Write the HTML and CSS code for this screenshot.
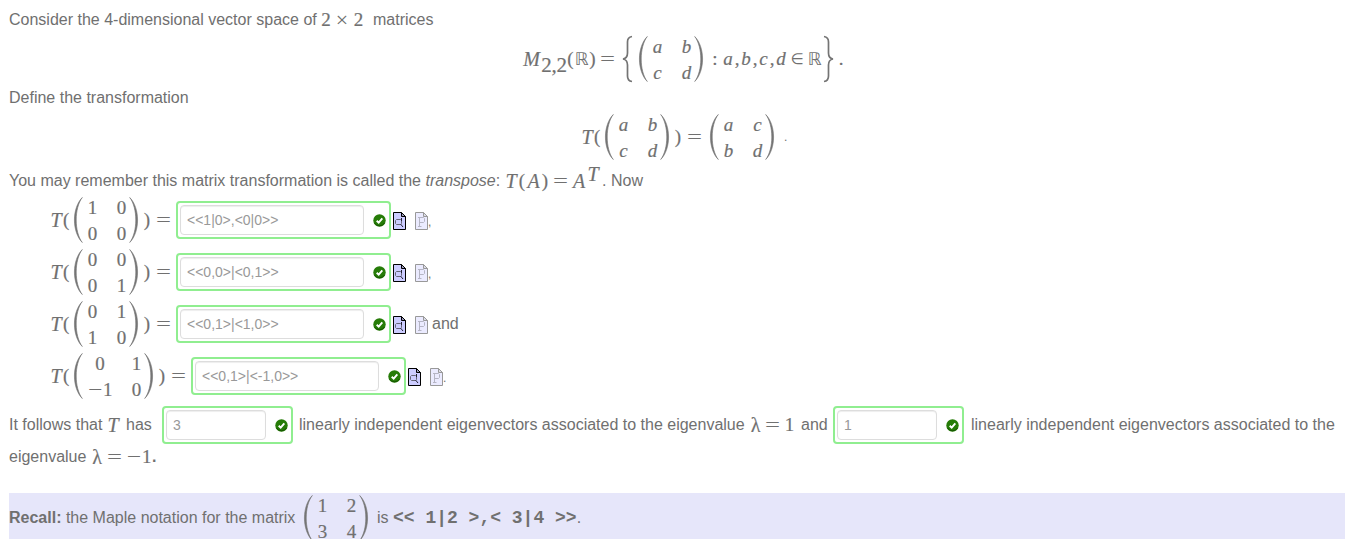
FILE: index.html
```
<!DOCTYPE html>
<html lang="en">
<head>
<meta charset="utf-8">
<title>Matrix transformations</title>
<link rel="stylesheet" href="styles.css">
</head>
<body>
<svg class="defs" width="0" height="0">
  <defs>
    <symbol id="lp" viewBox="0 0 10 48"><path d="M9.300 1.500C-1.200 12 -1.200 36 9.300 46.500C1.200 36 1.200 12 9.300 1.500Z" fill="#747474" stroke="#747474" stroke-width=".6"/></symbol>
    <symbol id="rp" viewBox="0 0 10 48"><path d="M.7 1.500C11.200 12 11.200 36 .7 46.500C8.800 36 8.800 12 .7 1.500Z" fill="#747474" stroke="#747474" stroke-width=".6"/></symbol>
    <symbol id="lb" viewBox="0 0 11 48"><path d="M10 1.500C6.500 2 5.500 4 5.500 7V18C5.500 21.500 4 23.500 1 24C4 24.500 5.500 26.500 5.500 30V41C5.500 44 6.500 46 10 46.500" fill="none" stroke="#747474" stroke-width="1.700"/></symbol>
    <symbol id="rb" viewBox="0 0 11 48"><path d="M1 1.500C4.500 2 5.500 4 5.500 7V18C5.500 21.500 7 23.500 10 24C7 24.500 5.500 26.500 5.500 30V41C5.500 44 4.500 46 1 46.500" fill="none" stroke="#747474" stroke-width="1.700"/></symbol>
    <symbol id="ok" viewBox="0 0 13 13"><circle cx="6.500" cy="6.500" r="6.200" fill="#267c08"/><path d="M1.500 9A6 6 0 0 0 11.500 9" fill="none" stroke="#155500" stroke-width="1"/><path d="M3.700 6.700L5.700 8.600L9.300 4.400" fill="none" stroke="#fff" stroke-width="1.900"/></symbol>
    <symbol id="view" viewBox="0 0 13 18"><path d="M.5 .5H8.500L12.500 4.500V17.500H.5Z" fill="#ccf" stroke="#000"/><path d="M8.500 .5V4.500H12.500Z" fill="#99b" stroke="#000"/><path d="M3.500 7.500H7.500L8.500 8.500V11.500L7.500 12.500H3.500L2.500 11.500V8.500Z" fill="#ccf" stroke="#667"/><path d="M7.500 12L10 15M8.500 6V9" fill="none" stroke="#223"/></symbol>
    <symbol id="page" viewBox="0 0 13 18"><path d="M.5 .5H8.500L12.500 4.500V17.500H.5Z" fill="#ebebff" stroke="#999"/><path d="M8.500 .5V4.500H12.500Z" fill="#dcdce8" stroke="#999"/><path d="M3 5.500H8.500L9.500 6.500V9.500L8.500 10.500H5M4.500 5.500V14.500M3 14.500H6.500" fill="none" stroke="#b5b5c4"/></symbol>
  </defs>
</svg>
<main class="question">
  <p class="line intro"><span class="w312">Consider the 4-dimensional vector space of</span><span class="m w10">2</span><span class="m w22 times">×</span><span class="m w11">2</span><span class="after8">matrices</span></p>

  <div class="line display space">
    <i class="m w19 cap">M</i><span class="m w26 sub">2,2</span><span class="m w7">(</span><span class="m w15 bb">ℝ</span><span class="m w7">)</span><span class="m w23 eq">=</span>
    <svg class="brace lbrace"><use href="#lb"/></svg>
    <span class="matrix"><svg class="paren"><use href="#lp"/></svg><span class="cells"><i>a</i><i>b</i><i>c</i><i>d</i></span><svg class="paren"><use href="#rp"/></svg></span>
    <span class="m w14 colon">:</span><i class="m w12">a</i><span class="m w6">,</span><i class="m w12">b</i><span class="m w6">,</span><i class="m w11">c</i><span class="m w6">,</span><i class="m w12">d</i><span class="m w20 in">∈</span><span class="m w15 bb">ℝ</span>
    <svg class="brace rbrace"><use href="#rb"/></svg><span class="m w14">.</span>
  </div>

  <p class="line define">Define the transformation</p>

  <div class="line display rule">
    <i class="m w14 cap">T</i><span class="m w10 open">(</span>
    <span class="matrix"><svg class="paren"><use href="#lp"/></svg><span class="cells"><i>a</i><i>b</i><i>c</i><i>d</i></span><svg class="paren"><use href="#rp"/></svg></span>
    <span class="m w12 close">)</span><span class="m w25 eq">=</span>
    <span class="matrix second"><svg class="paren"><use href="#lp"/></svg><span class="cells"><i>a</i><i>c</i><i>b</i><i>d</i></span><svg class="paren"><use href="#rp"/></svg></span>
    <span class="stop">.</span>
  </div>

  <p class="line transpose"><span class="w495">You may remember this matrix transformation is called the <em>transpose</em>:</span><i class="m w14 cap">T</i><span class="m w8">(</span><i class="m w15 cap">A</i><span class="m w8">)</span><span class="m w23 eq">=</span><i class="m w14 cap">A</i><i class="m w14 sup">T</i><span class="w11 dot">.</span><span>Now</span></p>

  <div class="line answer">
    <i class="m w14 cap">T</i><span class="m w10 open">(</span>
    <span class="matrix"><svg class="paren"><use href="#lp"/></svg><span class="cells"><b>1</b><b>0</b><b>0</b><b>0</b></span><svg class="paren"><use href="#rp"/></svg></span>
    <span class="m w12 close">)</span><span class="m w25 eq">=</span>
    <span class="field"><span class="input">&lt;&lt;1|0&gt;,&lt;0|0&gt;&gt;</span><svg class="ok"><use href="#ok"/></svg></span>
    <svg class="doc"><use href="#view"/></svg><svg class="doc page"><use href="#page"/></svg><span class="punct">,</span>
  </div>
  <div class="line answer">
    <i class="m w14 cap">T</i><span class="m w10 open">(</span>
    <span class="matrix"><svg class="paren"><use href="#lp"/></svg><span class="cells"><b>0</b><b>0</b><b>0</b><b>1</b></span><svg class="paren"><use href="#rp"/></svg></span>
    <span class="m w12 close">)</span><span class="m w25 eq">=</span>
    <span class="field"><span class="input">&lt;&lt;0,0&gt;|&lt;0,1&gt;&gt;</span><svg class="ok"><use href="#ok"/></svg></span>
    <svg class="doc"><use href="#view"/></svg><svg class="doc page"><use href="#page"/></svg><span class="punct">,</span>
  </div>
  <div class="line answer">
    <i class="m w14 cap">T</i><span class="m w10 open">(</span>
    <span class="matrix"><svg class="paren"><use href="#lp"/></svg><span class="cells"><b>0</b><b>1</b><b>1</b><b>0</b></span><svg class="paren"><use href="#rp"/></svg></span>
    <span class="m w12 close">)</span><span class="m w25 eq">=</span>
    <span class="field"><span class="input">&lt;&lt;0,1&gt;|&lt;1,0&gt;&gt;</span><svg class="ok"><use href="#ok"/></svg></span>
    <svg class="doc"><use href="#view"/></svg><svg class="doc page"><use href="#page"/></svg><span class="and">and</span>
  </div>
  <div class="line answer">
    <i class="m w14 cap">T</i><span class="m w10 open">(</span>
    <span class="matrix wide"><svg class="paren"><use href="#lp"/></svg><span class="cells"><b>0</b><b>1</b><b class="neg"><span class="minus">−</span>1</b><b>0</b></span><svg class="paren"><use href="#rp"/></svg></span>
    <span class="m w12 close">)</span><span class="m w25 eq">=</span>
    <span class="field"><span class="input">&lt;&lt;0,1&gt;|&lt;-1,0&gt;&gt;</span><svg class="ok"><use href="#ok"/></svg></span>
    <svg class="doc"><use href="#view"/></svg><svg class="doc page"><use href="#page"/></svg><span class="punct">.</span>
  </div>

  <div class="line follows">
    <span class="w97">It follows that</span><i class="m w14 cap">T</i><span class="w42">has</span>
    <span class="field small"><span class="input">3</span><svg class="ok"><use href="#ok"/></svg></span>
    <span class="w457">linearly independent eigenvectors associated to the eigenvalue</span><span class="m w11 lambda">λ</span><span class="m w23 eq">=</span><span class="m w11">1</span><span class="w38">and</span>
    <span class="field small"><span class="input">1</span><svg class="ok"><use href="#ok"/></svg></span>
    <span class="tail">linearly independent eigenvectors associated to the</span>
  </div>
  <p class="line eigen"><span class="w82">eigenvalue</span><span class="m w12 lambda">λ</span><span class="m w23 eq">=</span><span class="m w16 minus">−</span><span class="m w9">1</span><strong class="end">.</strong></p>

  <div class="line recall">
    <span class="w294"><strong>Recall:</strong> the Maple notation for the matrix</span>
    <span class="matrix"><svg class="paren"><use href="#lp"/></svg><span class="cells"><b>1</b><b>2</b><b>3</b><b>4</b></span><svg class="paren"><use href="#rp"/></svg></span>
    <span class="is">is</span><code>&lt;&lt; 1|2 &gt;,&lt; 3|4 &gt;&gt;</code><span>.</span>
  </div>
</main>
</body>
</html>
```
FILE: styles.css
```
* { box-sizing: border-box; }
body { margin: 0; background: #fff; overflow: hidden; height: 539px; }
.defs { display: block; height: 0; }
.question {
  display: flex; flex-direction: column; padding-left: 9px;
  font-family: "Liberation Sans", Arial, sans-serif; font-size: 16px; color: #707070;
}
.line { display: flex; align-items: center; margin: 0; flex: none; white-space: nowrap; line-height: 20px; }
.line > * { flex: none; }
svg { display: block; flex: none; }

.intro { height: 35px; padding-top: 5px; }
.display { height: 48px; }
.space { padding-left: 513px; }
.define { height: 30px; }
.rule { padding-left: 571px; }
.transpose { height: 33px; padding-top: 7px; }
.answer { height: 52px; padding-left: 40px; }
.follows { height: 44px; padding-top: 2px; }
.eigen { height: 20px; padding-top: 2px; }
.recall { height: 48px; margin-top: 27px; background: #e6e6fa; padding-top: 2px; }

/* math atoms */
.m, .cells { font-family: "Liberation Serif", "Times New Roman", "DejaVu Sans", serif; font-size: 19px; -webkit-text-stroke: .2px #707070; }
.m { text-align: center; }
.cap { font-size: 20px; }
.sub { font-size: 21px; padding-top: 11px; letter-spacing: -.2px; }
.sup { font-size: 20px; padding-bottom: 15px; }
.eq { transform: scaleX(1.4); -webkit-text-stroke: 0; }
.minus { transform: scaleX(1.35); -webkit-text-stroke: 0; }
.times { font-size: 22px; -webkit-text-stroke: 0; }
.bb { font-family: "DejaVu Sans", sans-serif; font-size: 17.5px; -webkit-text-stroke: 0; padding-bottom: 1px; }
.in { font-family: "DejaVu Sans", sans-serif; font-size: 15px; -webkit-text-stroke: 0; }
.lambda { font-size: 20px; }
.open { text-align: left; }
.close { text-align: right; padding-right: 1px; }
.colon { margin-left: 4px; }
.stop { margin-left: 9px; font-size: 12px; }
.matrix { display: flex; width: 66px; height: 48px; align-items: center; }
.second { margin-left: 2px; }
.paren { width: 10px; height: 48px; }
.cells { display: grid; grid-template-columns: 17px 17px; column-gap: 12px; grid-template-rows: 26px 26px; width: 46px; line-height: 26px; text-align: center; padding-top: 1px; }
.cells b { font-weight: normal; }
.cells { padding-left: 1px; }
.wide { width: 81px; }
.wide .cells { width: 61px; grid-template-columns: 32px 17px; }
.neg { display: flex; justify-content: center; gap: 2px; padding-left: 3px; }
.brace { width: 11px; height: 48px; }
.lbrace { margin: 0 5px 0 3px; }
.rbrace { margin-left: 1px; }

/* answer boxes */
.field { display: flex; align-items: center; width: 215px; height: 38px; padding: 2px; border: 2px solid #90ee90; border-radius: 4px; background: #fff; }
.input { width: 184px; height: 30px; border: 1px solid #ddd; border-radius: 4px; padding-left: 6px; font-size: 14px; line-height: 29px; color: #999; box-shadow: inset 0 1px 1px #eee; }
.ok { width: 13px; height: 13px; margin-left: 9px; }
.small { width: 131px; }
.small .input { width: 100px; }
.doc { width: 13px; height: 18px; margin: 2px 0 0 2px; }
.page { margin-left: 9px; }
.punct { font-size: 12px; padding-top: 4px; }
.and { margin-left: 4px; }
.tail { margin-left: 7px; }
.after8 { margin-left: 9px; }
.dot { padding-left: 2px; }
.end { margin-left: 1px; }
.is { width: 24px; padding-left: 8px; }
code { font: bold 18px/20px "Liberation Mono", "Courier New", monospace; }

.w6 { width: 6px; } .w7 { width: 7px; } .w8 { width: 8px; } .w9 { width: 9px; }
.w10 { width: 10px; } .w11 { width: 11px; } .w12 { width: 12px; } .w14 { width: 14px; }
.w15 { width: 15px; } .w16 { width: 16px; } .w19 { width: 19px; } .w20 { width: 20px; }
.w22 { width: 22px; } .w23 { width: 23px; } .w25 { width: 25px; } .w26 { width: 26px; }
.w38 { width: 38px; padding-left: 6px; }
.w42 { width: 42px; padding-left: 6px; }
.w82 { width: 82px; } .w97 { width: 97px; }
.w294 { width: 294px; }
.w312 { width: 312px; }
.w457 { width: 457px; padding-left: 6px; }
.w495 { width: 495px; }
```
